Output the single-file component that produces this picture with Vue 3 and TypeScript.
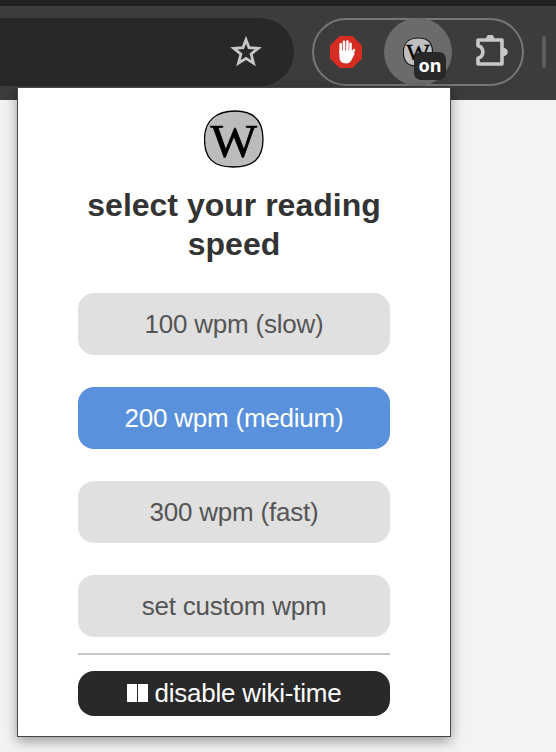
<script setup lang="ts">
import { ref } from 'vue'

interface Speed {
  id: string
  label: string
}

const speeds: Speed[] = [
  { id: 'slow', label: '100 wpm (slow)' },
  { id: 'medium', label: '200 wpm (medium)' },
  { id: 'fast', label: '300 wpm (fast)' },
  { id: 'custom', label: 'set custom wpm' },
]
const selected = ref<string>('medium')
</script>

<template>
  <div class="screen">
    <header class="toolbar">
      <div class="address">
        <svg class="star" viewBox="0 0 32 32" width="32" height="32">
          <path d="M16 3.7 19 11.6 28.2 12.3 21.1 18.1 23.5 27.2 16 22.3 8.5 27.2 10.9 18.1 3.8 12.3 13 11.6Z" fill="none" stroke="#c7c7c7" stroke-width="2.8" />
        </svg>
      </div>
      <div class="extensions">
        <svg class="blocker" viewBox="0 0 32 32" width="32" height="32">
          <path d="M9.500 0h13L32 9.500v13L22.500 32h-13L0 22.500v-13z" fill="#d52d22" />
          <g fill="none" stroke="#fff" stroke-width="2.600" stroke-linecap="round">
            <path d="M10.700 8.200v9M14 5.800v11M17.400 5.500v11M20.500 7.800v10" />
            <path d="M20.700 19.500 23.900 14.200" />
          </g>
          <path d="M9.400 14.500h12.400v3.700l1.800-1.500 1.300.8-3.900 7.500q-1.300 2.400-4.700 2.400-6.900 0-6.900-7z" fill="#fff" />
        </svg>
        <div class="active">
          <svg class="mini" viewBox="0 0 60 58" width="30" height="30">
            <path d="M31 1C49 1 59 9 59 29S49 57 29 57 .7 48 .7 29 13 1 31 1Z" fill="#bfbfbf" stroke="#171717" stroke-width="2.400" />
            <text x="6" y="45.500" textLength="48" lengthAdjust="spacingAndGlyphs">W</text>
          </svg>
          <span class="badge">on</span>
        </div>
        <svg class="puzzle" viewBox="0 0 34 34" width="34" height="34">
          <path d="M4 5h24v24H4v-5.800a6.400 6.400 0 0 0 0-12.400z" fill="none" stroke="#c7c7c7" stroke-width="3.600" stroke-linejoin="round" />
          <path d="M12 4a4.200 4.500 0 0 1 8.400 0zM29 12.800a4.800 4.200 0 0 1 0 8.400z" fill="#c7c7c7" />
        </svg>
      </div>
      <i class="separator"></i>
    </header>
    <main class="popup">
      <svg class="logo" viewBox="0 0 60 58" width="60" height="58">
        <path d="M31 1C49 1 59 9 59 29S49 57 29 57 .5 48 .5 29 13 1 31 1Z" fill="#bcbcbc" stroke="#000" stroke-width="1.300" />
        <text x="6.500" y="46.500" textLength="46.500" lengthAdjust="spacingAndGlyphs">W</text>
      </svg>
      <h1>select your reading speed</h1>
      <div class="options">
        <button
          v-for="speed in speeds"
          :key="speed.id"
          class="option"
          :class="{ selected: selected === speed.id }"
          @click="selected = speed.id"
        >{{ speed.label }}</button>
      </div>
      <hr />
      <button class="disable">
        <svg viewBox="0 0 21 18" width="21" height="18"><path d="M0 0h10v18H0zM11 0h10v18H11z" fill="#fff" /></svg>
        <span>disable wiki-time</span>
      </button>
    </main>
  </div>
</template>

<style>
body {
  margin: 0;
  background: #f3f3f3;
}
</style>

<style scoped>
.screen {
  width: 556px;
  height: 752px;
  overflow: hidden;
  background: #f3f3f3;
  font-family: "Liberation Sans", Arial, sans-serif;
}
.toolbar {
  box-sizing: border-box;
  display: flex;
  height: 100px;
  padding-top: 12px;
  border-top: 6px solid #202221;
  background: #3c3c3c;
}
.address {
  box-sizing: border-box;
  display: flex;
  align-items: center;
  justify-content: flex-end;
  width: 294px;
  height: 68px;
  padding-right: 32px;
  border-radius: 0 34px 34px 0;
  background: #282828;
}
.extensions {
  box-sizing: border-box;
  display: flex;
  align-items: center;
  width: 212px;
  height: 68px;
  margin-left: 18px;
  padding-left: 16px;
  border: 2px solid #777;
  border-radius: 34px;
}
.active {
  position: relative;
  display: flex;
  align-items: center;
  justify-content: center;
  width: 68px;
  height: 68px;
  margin-left: 22px;
  flex: none;
  border-radius: 50%;
  background: #6b6b6b;
}
.badge {
  position: absolute;
  left: 30px;
  top: 34px;
  width: 32px;
  height: 28px;
  border-radius: 7px;
  background: #282828;
  color: #fff;
  font: bold 18px/26px "Noto Sans", sans-serif;
  text-align: center;
}
.puzzle {
  margin-left: 22px;
  flex: none;
}
.separator {
  width: 4px;
  height: 32px;
  margin: 18px 0 0 18px;
  border-radius: 2px;
  background: #5d5d5d;
}
.logo text,
.mini text {
  font: 47px "Liberation Serif", serif;
  stroke: #000;
  stroke-width: 0.7px;
}
.popup {
  position: absolute;
  left: 17px;
  top: 87px;
  box-sizing: border-box;
  display: flex;
  flex-direction: column;
  align-items: center;
  width: 434px;
  height: 650px;
  padding: 22px 60px 0;
  border: 1px solid #454545;
  background: #fff;
  box-shadow: 0 4px 12px rgba(0, 0, 0, 0.38);
}
.logo {
  flex: none;
}
h1 {
  width: 312px;
  margin: 18px 0 0;
  color: #333;
  font-size: 32px;
  line-height: 39px;
  text-align: center;
}
.options {
  display: flex;
  flex-direction: column;
  gap: 32px;
  margin-top: 29px;
}
button {
  border: 0;
  padding: 0;
  width: 312px;
  border-radius: 16px;
  font-family: inherit;
  font-size: 26px;
  letter-spacing: -0.22px;
}
.option {
  height: 62px;
  background: #e0e0e0;
  color: #555;
}
.option.selected {
  background: #5991dd;
  color: #fff;
}
hr {
  width: 312px;
  height: 2px;
  margin: 16px 0;
  border: 0;
  flex: none;
  background: #c8c8c8;
}
.disable {
  display: flex;
  align-items: center;
  justify-content: center;
  gap: 7px;
  height: 45px;
  background: #292929;
  color: #fff;
}
.disable svg {
  margin-bottom: 1px;
}
</style>
